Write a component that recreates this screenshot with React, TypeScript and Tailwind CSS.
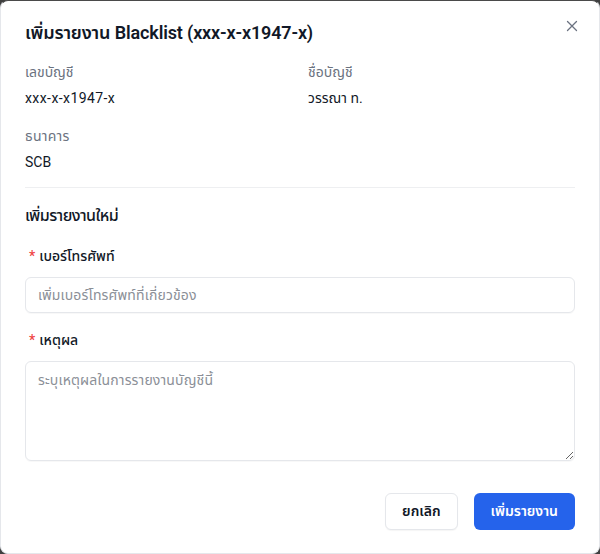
import React from "react";

export default function App() {
  return (
    <div className="w-[600px] h-[554px] bg-[#3f3f3f] font-['Roboto','Noto_Sans_Thai',sans-serif]">
      <div className="relative w-[600px] h-[554px] bg-white rounded-lg border border-[#e5e7eb] border-t-[#4a4a4a] flex flex-col px-6 pt-[18px]">
        <button className="absolute right-[20px] top-[18px] text-[#6b7280]">
          <svg width="14" height="14" viewBox="0 0 14 14" fill="none" stroke="currentColor" strokeWidth="1.3" strokeLinecap="round">
            <path d="M2.5 2.5L11.5 11.5M11.5 2.5L2.5 11.5" />
          </svg>
        </button>
        <h2 className="text-[18px] font-semibold text-[#111827] leading-7 tracking-[-0.008em]">เพิ่มรายงาน Blacklist (xxx-x-x1947-x)</h2>
        <div className="grid grid-cols-2 gap-x-4 mt-[15px]">
          <div>
            <div className="text-[14px] text-[#6b7280] leading-5">เลขบัญชี</div>
            <div className="text-[14px] text-[#111827] leading-5 mt-[6px] tracking-[0.03em]">xxx-x-x1947-x</div>
          </div>
          <div>
            <div className="text-[14px] text-[#6b7280] leading-5">ชื่อบัญชี</div>
            <div className="text-[14px] text-[#111827] leading-5 mt-[6px]">วรรณา ท.</div>
          </div>
          <div className="mt-[18px]">
            <div className="text-[14px] text-[#6b7280] leading-5 tracking-[0.02em]">ธนาคาร</div>
            <div className="text-[14px] text-[#111827] leading-5 mt-[6px]">SCB</div>
          </div>
        </div>
        <div className="h-px bg-[#eeeff1] mt-[15px]" />
        <div className="text-[16px] font-medium text-[#111827] leading-6 mt-[16px] tracking-[-0.035em]">เพิ่มรายงานใหม่</div>
        <label className="text-[14px] font-medium text-[#111827] leading-5 mt-[18px] flex items-center gap-1 pl-[4px]">
          <span className="text-[#ef4444]">*</span>
          <span>เบอร์โทรศัพท์</span>
        </label>
        <input
          className="mt-[11px] h-[36px] w-full rounded-md border border-[#e5e7eb] px-3 text-[14px] tracking-[0.01em] outline-none placeholder:text-[#8b8f97] shadow-[0_1px_1px_rgba(0,0,0,0.03)]"
          placeholder="เพิ่มเบอร์โทรศัพท์ที่เกี่ยวข้อง"
        />
        <label className="text-[14px] font-medium text-[#111827] leading-5 mt-[17px] flex items-center gap-1 pl-[4px]">
          <span className="text-[#ef4444]">*</span>
          <span>เหตุผล</span>
        </label>
        <textarea
          className="mt-[11px] h-[100px] w-full rounded-md border border-[#e5e7eb] px-3 py-[8px] text-[14px] tracking-[0.01em] outline-none placeholder:text-[#8b8f97] shadow-[0_1px_1px_rgba(0,0,0,0.03)]"
          placeholder="ระบุเหตุผลในการรายงานบัญชีนี้"
        />
        <div className="flex justify-end gap-4 mt-[32px]">
          <button className="h-[37px] px-[16px] rounded-md border border-[#e5e7eb] bg-white text-[14px] font-semibold text-[#111827] shadow-[0_1px_1px_rgba(0,0,0,0.04)]">ยกเลิก</button>
          <button className="h-[37px] px-[17px] rounded-md bg-[#2563eb] text-[14px] font-semibold text-white">เพิ่มรายงาน</button>
        </div>
      </div>
    </div>
  );
}
